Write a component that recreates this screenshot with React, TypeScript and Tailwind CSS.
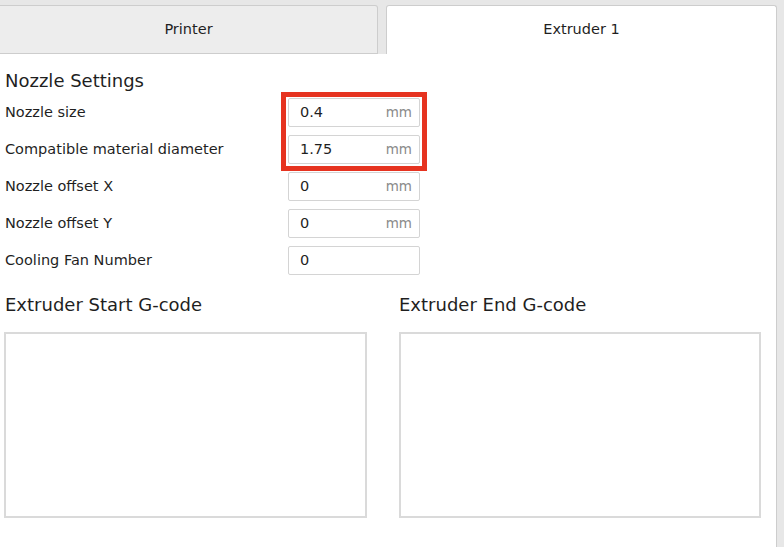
import React from "react";

const font = { fontFamily: '"DejaVu Sans", Verdana, sans-serif' };

function Field({ label, value, unit }: { label: string; value: string; unit?: string }) {
  return (
    <div className="flex items-center h-[29px]">
      <div className="w-[288px] pl-[5px] text-[14.5px] text-[#1f1f1f]">{label}</div>
      <div className="w-[132px] h-[29px] border border-[#d4d4d4] rounded-[2px] bg-white flex items-center justify-between pl-[11px] pr-[7px]">
        <span className="text-[14.5px] text-[#1f1f1f]">{value}</span>
        {unit && <span className="text-[13.5px] text-[#8a8a8a]">{unit}</span>}
      </div>
    </div>
  );
}

export default function App() {
  return (
    <div className="w-[784px] h-[547px] bg-[#e7e7e7] overflow-hidden flex flex-col" style={font}>
      <div className="h-[54px] pt-[5px] flex shrink-0">
        <div className="w-[378px] h-[49px] bg-[#ededed] border-t border-r border-b border-[#cdcdcd] rounded-tr-[3px] flex items-center justify-center text-[14.5px] text-[#1f1f1f]">
          Printer
        </div>
        <div className="w-[8px]" />
        <div className="w-[391px] h-[49px] bg-white border-t border-l border-r border-[#cdcdcd] rounded-t-[3px] flex items-center justify-center text-[14.5px] text-[#1f1f1f]">
          Extruder 1
        </div>
      </div>
      <div className="w-[777px] flex-1 bg-white border-r border-[#cdcdcd] relative">
        <div className="pt-[15px] pl-[5px] text-[18px] leading-[24px] text-[#1f1f1f]">Nozzle Settings</div>
        <div className="mt-[5px] flex flex-col gap-[8px]">
          <Field label="Nozzle size" value="0.4" unit="mm" />
          <Field label="Compatible material diameter" value="1.75" unit="mm" />
          <Field label="Nozzle offset X" value="0" unit="mm" />
          <Field label="Nozzle offset Y" value="0" unit="mm" />
          <Field label="Cooling Fan Number" value="0" />
        </div>
        <div className="absolute left-[281px] top-[38px] w-[146px] h-[79px] border-[5px] border-[#e63320]" />
        <div className="flex mt-[18px]">
          <div className="w-[399px] pl-[4px]">
            <div className="pl-[1px] text-[18px] leading-[24px] text-[#1f1f1f]">Extruder Start G-code</div>
            <div className="mt-[15px] w-[363px] h-[186px] border-2 border-[#dadada] bg-white" />
          </div>
          <div className="w-[363px]">
            <div className="text-[18px] leading-[24px] text-[#1f1f1f]">Extruder End G-code</div>
            <div className="mt-[15px] w-[362px] h-[186px] border-2 border-[#dadada] bg-white" />
          </div>
        </div>
      </div>
    </div>
  );
}
